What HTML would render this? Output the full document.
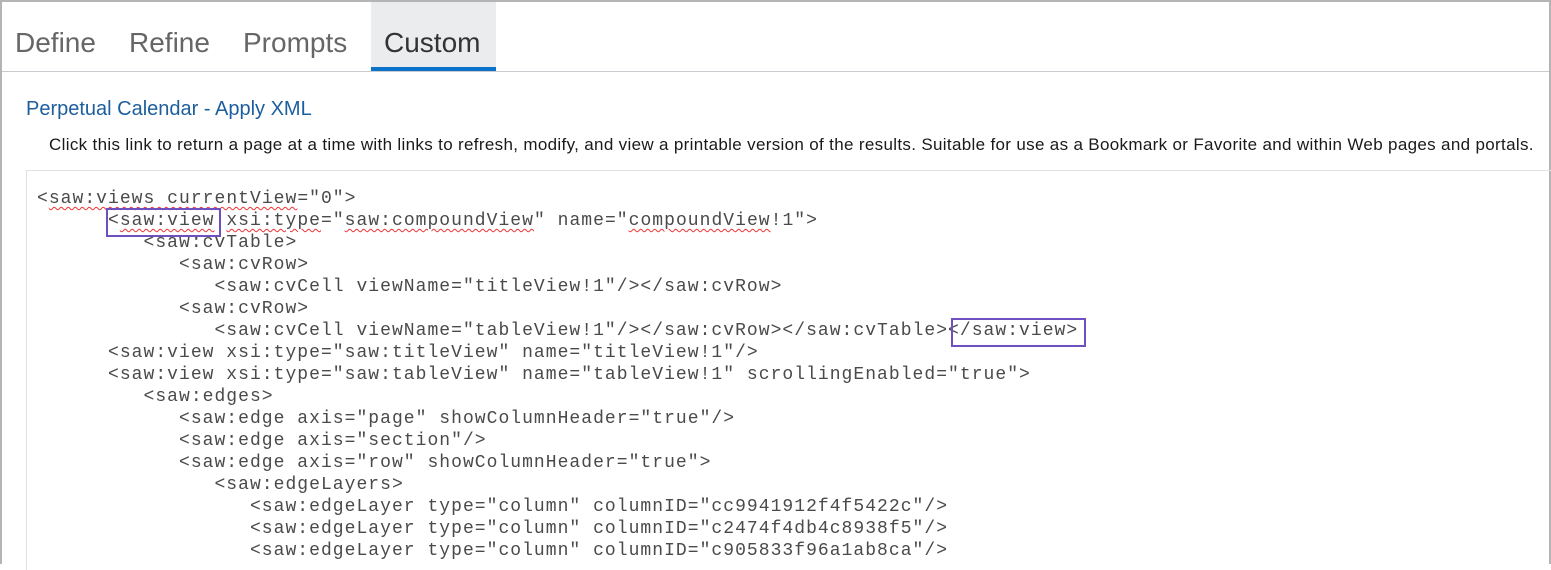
<!DOCTYPE html>
<html><head><meta charset="utf-8"><style>
*{margin:0;padding:0;box-sizing:border-box}
body{width:1551px;height:564px;overflow:hidden;background:#fff;position:relative;font-family:"Liberation Sans",Arial,sans-serif}
.frame{position:absolute;left:0;top:0;width:1551px;height:564px;border:2px solid #b4b4b4;border-bottom:none}
.tab{position:absolute;top:27px;font-size:28px;color:#666}
.ctab{position:absolute;left:371px;top:2px;width:125px;height:69px;background:#ebecee;border-bottom:4px solid #0a72c8}
.hline{position:absolute;left:2px;top:71px;width:1547px;height:1px;background:#c8ccd0}
.title{position:absolute;left:26px;top:98px;font-size:20px;color:#1c5e9e}
.desc{position:absolute;left:49px;top:135px;font-size:17px;letter-spacing:0.33px;color:#1a1a1a;white-space:nowrap}
.box{position:absolute;left:26px;top:170px;width:1525px;height:400px;border-left:1px solid #dfe3e6;border-top:1px solid #dfe3e6}
.code{position:absolute;left:37px;top:188px;font-family:"Liberation Mono","Courier New",monospace;font-size:18px;letter-spacing:1.03px;line-height:22px;color:#4a4a4a;white-space:pre}
.code div{height:22px}
.u{text-decoration:underline wavy #e33;text-decoration-thickness:1px;text-underline-offset:3px}
.pb{position:absolute;border:2px solid #6e50c0}
</style></head><body>
<div class="frame"></div>
<div class="ctab"></div>
<div class="tab" style="left:15px">Define</div>
<div class="tab" style="left:129px">Refine</div>
<div class="tab" style="left:243px">Prompts</div>
<div class="tab" style="left:384px;color:#333">Custom</div>
<div class="hline"></div>
<div class="title">Perpetual Calendar - Apply XML</div>
<div class="desc">Click this link to return a page at a time with links to refresh, modify, and view a printable version of the results. Suitable for use as a Bookmark or Favorite and within Web pages and portals.</div>
<div class="box"></div>
<div class="code"><div>&lt;<span class="u">saw:views currentView</span>="0"&gt;</div><div>      &lt;<span class="u">saw:view</span> <span class="u">xsi:type</span>="<span class="u">saw:compoundView</span>" name="<span class="u">compoundView</span>!1"&gt;</div><div>         &lt;saw:cvTable&gt;</div><div>            &lt;saw:cvRow&gt;</div><div>               &lt;saw:cvCell viewName="titleView!1"/&gt;&lt;/saw:cvRow&gt;</div><div>            &lt;saw:cvRow&gt;</div><div>               &lt;saw:cvCell viewName="tableView!1"/&gt;&lt;/saw:cvRow&gt;&lt;/saw:cvTable&gt;&lt;/saw:view&gt;</div><div>      &lt;saw:view xsi:type="saw:titleView" name="titleView!1"/&gt;</div><div>      &lt;saw:view xsi:type="saw:tableView" name="tableView!1" scrollingEnabled="true"&gt;</div><div>         &lt;saw:edges&gt;</div><div>            &lt;saw:edge axis="page" showColumnHeader="true"/&gt;</div><div>            &lt;saw:edge axis="section"/&gt;</div><div>            &lt;saw:edge axis="row" showColumnHeader="true"&gt;</div><div>               &lt;saw:edgeLayers&gt;</div><div>                  &lt;saw:edgeLayer type="column" columnID="cc9941912f4f5422c"/&gt;</div><div>                  &lt;saw:edgeLayer type="column" columnID="c2474f4db4c8938f5"/&gt;</div><div>                  &lt;saw:edgeLayer type="column" columnID="c905833f96a1ab8ca"/&gt;</div></div>
<div class="pb" style="left:106px;top:208px;width:115px;height:29px"></div>
<div class="pb" style="left:951px;top:318px;width:135px;height:29px"></div>
</body></html>
